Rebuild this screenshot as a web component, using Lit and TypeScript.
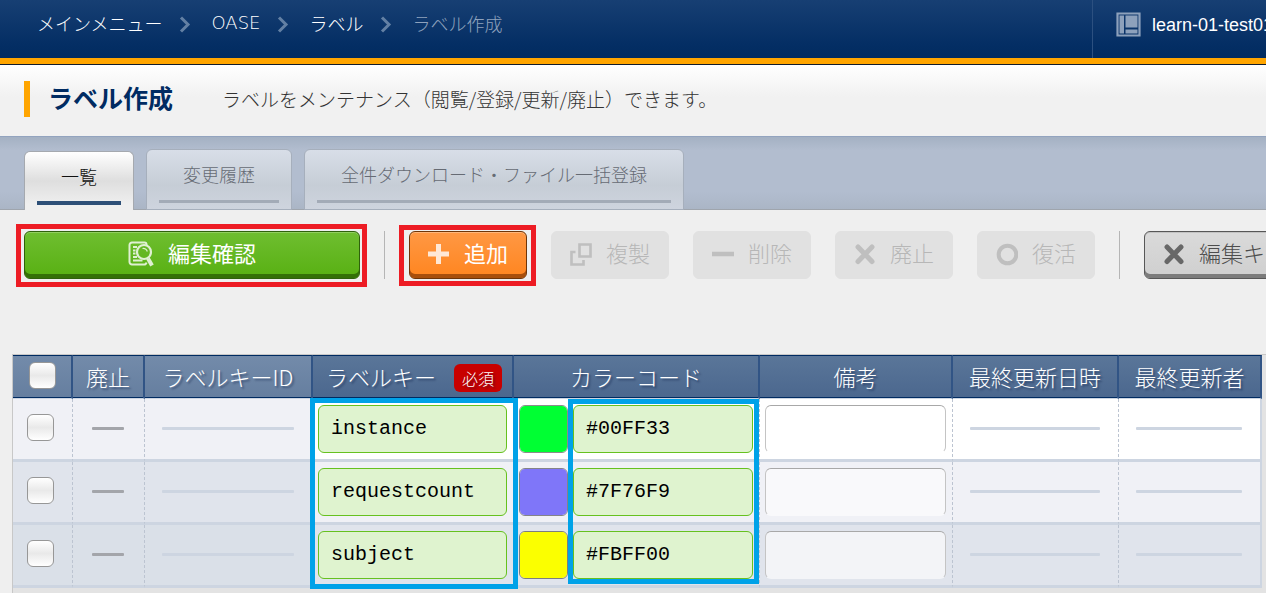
import { LitElement, html, css, svg } from "lit";
import { customElement, state } from "lit/decorators.js";

interface LabelRow {
  key: string;
  color: string;
  note: string;
}

const icons: Record<string, unknown> = {
  chevron: svg`<path d="M2 1.500l7 7-7 7" fill="none" stroke="currentColor" stroke-width="3"/>`,
  workspace: svg`<path d="M1.500 1.500h22v22h-22z" fill="none" stroke="currentColor" stroke-width="2.200"/><path d="M3.500 3.500h4.500v18H3.500zM9.500 3.500h12v12H9.500zM9.500 17.500h12v4H9.500z" fill="currentColor"/>`,
  check: svg`<g fill="none" stroke="currentColor"><path d="M18.500 4V3.500a2 2 0 0 0-2-2H4a2.500 2.500 0 0 0-2.500 2.500v17A2.500 2.500 0 0 0 4 23.500h12a2.500 2.500 0 0 0 2.500-2" stroke-width="2"/><path d="M5 6h4M5 9.500h2.500M5 12.500h2.500M5 16h4M5 19.500h9.500" stroke-width="1.800"/><circle cx="16" cy="11" r="7" stroke-width="2.200"/><path d="M14.500 7.500a4 4 0 0 1 4.800 3" stroke-width="1.200"/><path d="M20 17.500l4 7" stroke-width="4"/></g>`,
  plus: svg`<path d="M10.500 1v20M0 11h21" stroke="currentColor" stroke-width="5"/>`,
  copy: svg`<path d="M9.500 1.500h11v12h-11zM5.500 9H1.500v12.500h12v-4.500" fill="none" stroke="currentColor" stroke-width="2.600"/>`,
  minus: svg`<path d="M0 11h22" stroke="currentColor" stroke-width="4.500"/>`,
  cross: svg`<path d="M4 4l14 14.500M18 4l-14 14.500" stroke="currentColor" stroke-width="5" stroke-linecap="round"/>`,
  circle: svg`<circle cx="11.500" cy="11.500" r="8.800" fill="none" stroke="currentColor" stroke-width="4"/>`,
};

const icon = (name: string, width: number, height: number) =>
  html`<svg class="icon" width=${width} height=${height} viewBox="0 0 ${width} ${height}" aria-hidden="true">${icons[name]}</svg>`;

@customElement("app-root")
export class AppRoot extends LitElement {
  @state() private rows: LabelRow[] = [
    { key: "instance", color: "#00FF33", note: "" },
    { key: "requestcount", color: "#7F76F9", note: "" },
    { key: "subject", color: "#FBFF00", note: "" },
  ];

  @state() private activeTab = 0;

  private tabs = ["一覧", "変更履歴", "全件ダウンロード・ファイル一括登録"];

  static styles = css`
    :host {
      display: flex;
      flex-direction: column;
      min-height: 100vh;
      overflow: hidden;
      background: #efefef;
      color: #333;
      font-family: "Noto Sans CJK JP", sans-serif;
      font-size: 18px;
      font-weight: 300;
      line-height: 24px;
    }
    * {
      box-sizing: border-box;
    }
    button,
    input {
      margin: 0;
      font: inherit;
      color: inherit;
    }
    .icon {
      display: block;
      flex: none;
    }

    .header {
      display: flex;
      height: 65px;
      background: linear-gradient(#173f73, #042e64 70%, #002a5e);
      border-bottom: 1px solid #111c2c;
      box-shadow: inset 0 -6px #ffa500;
      color: #fff;
    }
    .crumbs {
      flex: 1;
      display: flex;
      align-items: center;
      gap: 20px;
      min-width: 0;
      margin: 0;
      padding: 0 0 18px 37px;
      list-style: none;
      white-space: nowrap;
    }
    .crumbs li {
      display: flex;
      align-items: center;
      gap: 17px;
    }
    .crumbs .icon {
      margin-top: 3px;
      color: #6380a4;
    }
    .crumbs a {
      color: #fff;
      text-decoration: none;
    }
    .crumbs .latin {
      font-family: "DejaVu Sans", sans-serif;
    }
    .crumbs .current {
      color: #8ea2bd;
    }
    .workspace {
      flex: 0 0 174px;
      display: flex;
      align-items: center;
      gap: 11px;
      height: 58px;
      padding: 0 0 9px 23px;
      border: 0;
      border-left: 1px solid #2c5080;
      background: none;
      overflow: hidden;
      white-space: nowrap;
      font-family: "Liberation Sans", sans-serif;
      font-weight: 400;
    }
    .workspace .icon {
      color: #8da1bc;
    }

    .title-bar {
      display: flex;
      align-items: center;
      gap: 49px;
      height: 71px;
      padding: 0 24px 4px;
      background: linear-gradient(#fff, #f1f1f1 45%);
    }
    h1 {
      margin: 0;
      padding: 0 0 4px 18px;
      border-left: 6px solid #ffa500;
      color: #002b62;
      font-size: 25px;
      font-weight: 700;
      line-height: 32px;
    }
    .description {
      margin: 0;
      font-size: 19px;
    }

    .tabs {
      display: flex;
      align-items: flex-end;
      gap: 12px;
      height: 74px;
      padding: 0 24px;
      border-top: 1px solid #93a4bf;
      background: linear-gradient(#a4b1c3, #b2bdcf 18%, #b2bdcf 75%, #aab5c5);
      box-shadow: inset 0 -1px #9fa5ad;
    }
    .tab {
      display: flex;
      flex-direction: column;
      height: 61px;
      padding: 0 12px;
      border: 1px solid #a6afbc;
      border-radius: 6px 6px 0 0;
      background: linear-gradient(#d8dee8, #c6cdd6 60%, #ced4de);
      color: #666b74;
      white-space: nowrap;
    }
    .tab span {
      flex: 1;
      padding: 12px 24px 0;
      border-bottom: 3px solid #a3abb7;
      margin-bottom: 6px;
    }
    .tab.active {
      height: 59px;
      border-color: #a5a9af;
      border-bottom: 0;
      background: linear-gradient(#fff, #dedede 50%, #efefef 90%);
      color: #111;
    }
    .tab.active span {
      border-bottom: 4px solid #2d4f77;
      margin-bottom: 5px;
    }

    .toolbar {
      display: flex;
      gap: 24px;
      padding: 21px 24px 75px;
    }
    .separator {
      flex: 0 0 1px;
      background: #b5b5b5;
    }
    .tool {
      position: relative;
      flex: none;
      display: flex;
      align-items: center;
      justify-content: center;
      gap: 14px;
      height: 48px;
      padding: 0 18px 2px;
      border: 1px solid;
      border-radius: 6px;
      font-size: 22px;
      white-space: nowrap;
    }
    .tool span {
      padding-bottom: 4px;
    }
    .tool .icon {
      opacity: 0.8;
    }
    .tool:disabled {
      border-color: #e1e1e1;
      background: #e1e1e1;
      color: #b7b7b7;
    }
    .confirm {
      flex-basis: 336px;
      border-color: #2f610b;
      background: linear-gradient(#6fbe30, #58b012);
      box-shadow: inset 0 -4px #347007, inset 0 1px #92cf60;
      color: #fff;
      font-weight: 400;
    }
    .add {
      border-color: #6f3508;
      background: linear-gradient(#ff9844, #ff851f);
      box-shadow: inset 0 -4px #a84f0c, inset 0 1px #ffb67a;
      color: #fff;
      font-weight: 400;
    }
    .cancel {
      border-color: #575757;
      background: linear-gradient(#dadada, #cfcfcf);
      box-shadow: inset 0 -4px #7c7c7c, inset 0 1px #c2c2c2;
      color: #4d4d4d;
    }
    .marked::after {
      content: "";
      position: absolute;
      inset: -8px -8px -9px -9px;
      border: 5px solid #ed1c24;
    }
    .add.marked::after {
      inset: -7px -10px -8px -11px;
    }

    .grid {
      flex: 1;
      margin-left: 12px;
      padding-right: 4px;
      border: solid #c8c8c8;
      border-width: 1px 0 0 1px;
      background: #e3e3e3;
    }
    table {
      width: 100%;
      table-layout: fixed;
      border-collapse: separate;
      border-spacing: 0;
    }
    .w-check { width: 60px; }
    .w-discard { width: 72px; }
    .w-id { width: 168px; }
    .w-key { width: 201px; }
    .w-color { width: 246px; }
    .w-note { width: 193px; }
    .w-date { width: 166px; }
    th {
      height: 44px;
      padding: 0 0 3px;
      border: solid #002b62;
      border-width: 1px 0;
      border-right: 2px solid #315485;
      border-bottom-color: #cdd5e1;
      background: linear-gradient(#5a7699, #4b678e);
      box-shadow: inset 0 -1px #002b62;
      color: #fff;
      font-size: 22px;
      font-weight: 300;
      white-space: nowrap;
      text-shadow: 2px 2px 2px rgba(0, 20, 60, 0.4);
    }
    th.fixed {
      background: linear-gradient(#738baa, #657e9f);
    }
    .required-head {
      display: flex;
      align-items: center;
      justify-content: space-between;
      padding: 0 10px 0 13px;
    }
    .badge {
      margin-top: 4px;
      padding: 2px 8px;
      border-radius: 6px;
      background: #c80000;
      font-size: 16px;
    }
    td {
      height: 63px;
      padding: 0 6px 0 5px;
      border-right: 1px dashed #bcc4d1;
      border-bottom: 3px solid #cdd5e1;
      background: #fff;
    }
    td:last-child {
      border-right: 2px solid #cdd5e1;
    }
    td.fixed { background: #f0f1f6; }
    tr:nth-child(2) td { background: #f0f1f6; }
    tr:nth-child(2) td.fixed { background: #e0e4ec; }
    tr:nth-child(3) td { background: #e0e4ec; }
    tr:nth-child(3) td.fixed { background: #dae0e8; }
    .check {
      appearance: none;
      display: block;
      width: 27px;
      height: 27px;
      margin: 0 auto;
      border: 1px solid #979797;
      border-radius: 6px;
      background: linear-gradient(#fff, #e9e9e9 50%, #fff);
    }
    td .check {
      margin-left: 9px;
      margin-bottom: 3px;
    }
    .rule {
      display: block;
      height: 3px;
      margin: 0 12px 2px;
      border-radius: 1px;
      background: #cdd5e1;
    }
    .rule.short {
      margin: 0 14px 2px;
      background: #a3a5aa;
    }
    .field {
      display: block;
      width: 100%;
      height: 48px;
      padding: 0 12px 2px;
      border: 1px solid #66c11f;
      border-radius: 6px;
      background: #dff3cf;
      color: #000;
      font-family: "Liberation Mono", monospace;
      font-size: 20px;
    }
    .field.plain {
      border-color: #a8a8a8 #c4c4c4 transparent;
      background: rgba(255, 255, 255, 0.6);
    }
    .cell {
      position: relative;
      display: flex;
      gap: 5px;
    }
    .cell .code {
      position: relative;
      flex: 1;
    }
    .swatch {
      appearance: none;
      flex: 0 0 49px;
      height: 48px;
      padding: 0;
      border: 1px solid rgba(0, 0, 0, 0.45);
      border-radius: 6px;
      background: none;
      overflow: hidden;
    }
    .swatch::-webkit-color-swatch-wrapper {
      padding: 0;
    }
    .swatch::-webkit-color-swatch {
      border: 0;
      border-radius: 0;
    }
    .highlight {
      position: absolute;
      z-index: 1;
      border: 5px solid #00a2e8;
      pointer-events: none;
    }
    .highlight.keys {
      inset: -7px -11px auto -8px;
      height: 191px;
    }
    .highlight.codes {
      inset: -6px -6px auto -5px;
      height: 185px;
    }
  `;

  private renderRow(row: LabelRow, index: number) {
    const n = index + 1;
    return html`
      <tr>
        <td class="fixed"><input class="check" type="checkbox" aria-label="${n}" /></td>
        <td class="fixed"><span class="rule short"></span></td>
        <td class="fixed"><span class="rule"></span></td>
        <td>
          <div class="cell">
            <input class="field" type="text" aria-label="ラベルキー ${n}" .value=${row.key} />
            ${index === 0 ? html`<span class="highlight keys"></span>` : null}
          </div>
        </td>
        <td>
          <div class="cell">
            <input class="swatch" type="color" aria-label="カラー ${n}" .value=${row.color.toLowerCase()} />
            <div class="code">
              <input class="field" type="text" aria-label="カラーコード ${n}" .value=${row.color} />
              ${index === 0 ? html`<span class="highlight codes"></span>` : null}
            </div>
          </div>
        </td>
        <td><input class="field plain" type="text" aria-label="備考 ${n}" .value=${row.note} /></td>
        <td><span class="rule"></span></td>
        <td><span class="rule"></span></td>
      </tr>
    `;
  }

  render() {
    return html`
      <header class="header">
        <ol class="crumbs">
          <li><a href="#">メインメニュー</a>${icon("chevron", 12, 17)}</li>
          <li><a class="latin" href="#">OASE</a>${icon("chevron", 12, 17)}</li>
          <li><a href="#">ラベル</a>${icon("chevron", 12, 17)}</li>
          <li class="current">ラベル作成</li>
        </ol>
        <button class="workspace" type="button">${icon("workspace", 25, 25)}<span>learn-01-test01</span></button>
      </header>

      <div class="title-bar">
        <h1>ラベル作成</h1>
        <p class="description">ラベルをメンテナンス（閲覧/登録/更新/廃止）できます。</p>
      </div>

      <nav class="tabs">
        ${this.tabs.map(
          (label, i) => html`<button
            type="button"
            class="tab ${i === this.activeTab ? "active" : ""}"
            @click=${() => (this.activeTab = i)}
          ><span>${label}</span></button>`
        )}
      </nav>

      <div class="toolbar">
        <button class="tool confirm marked" type="button">${icon("check", 26, 26)}<span>編集確認</span></button>
        <i class="separator"></i>
        <button class="tool add marked" type="button">${icon("plus", 22, 23)}<span>追加</span></button>
        <button class="tool" type="button" disabled>${icon("copy", 22, 23)}<span>複製</span></button>
        <button class="tool" type="button" disabled>${icon("minus", 22, 23)}<span>削除</span></button>
        <button class="tool" type="button" disabled>${icon("cross", 22, 23)}<span>廃止</span></button>
        <button class="tool" type="button" disabled>${icon("circle", 22, 23)}<span>復活</span></button>
        <i class="separator"></i>
        <button class="tool cancel" type="button">${icon("cross", 22, 23)}<span>編集キャンセル</span></button>
      </div>

      <div class="grid">
        <table>
          <colgroup>
            <col class="w-check" />
            <col class="w-discard" />
            <col class="w-id" />
            <col class="w-key" />
            <col class="w-color" />
            <col class="w-note" />
            <col class="w-date" />
            <col />
          </colgroup>
          <thead>
            <tr>
              <th class="fixed"><input class="check" type="checkbox" aria-label="一覧" /></th>
              <th class="fixed">廃止</th>
              <th class="fixed">ラベルキーID</th>
              <th><div class="required-head">ラベルキー<span class="badge">必須</span></div></th>
              <th>カラーコード</th>
              <th>備考</th>
              <th>最終更新日時</th>
              <th>最終更新者</th>
            </tr>
          </thead>
          <tbody>
            ${this.rows.map((row, i) => this.renderRow(row, i))}
          </tbody>
        </table>
      </div>
    `;
  }
}
